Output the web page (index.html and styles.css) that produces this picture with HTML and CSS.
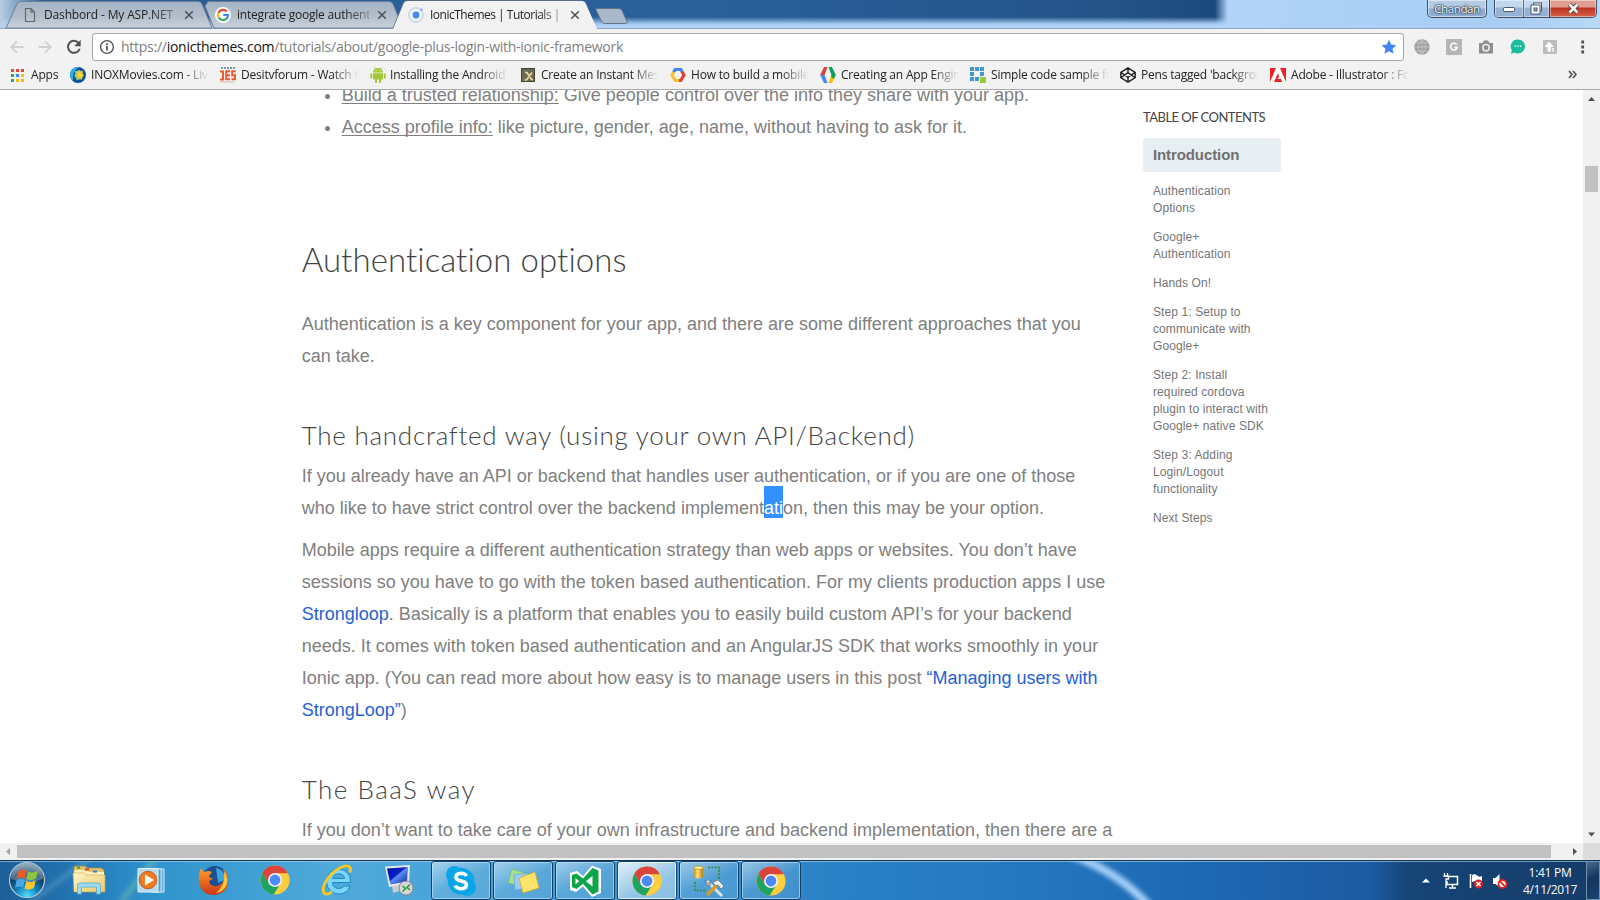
FILE: index.html
```html
<!DOCTYPE html>
<html lang="en">
<head>
<meta charset="utf-8">
<title>IonicThemes | Tutorials</title>
<link rel="stylesheet" href="styles.css">
</head>
<body>
<svg class="defs" width="0" height="0" aria-hidden="true">
  <defs>
    <linearGradient id="tabfill" x1="0" y1="0" x2="0" y2="1"><stop offset="0" stop-color="#a3b3c6"/><stop offset=".55" stop-color="#b3becb"/><stop offset="1" stop-color="#c8d2de"/></linearGradient>
    <radialGradient id="orb" cx=".5" cy=".95" r=".9"><stop offset="0" stop-color="#4fe0ff"/><stop offset=".35" stop-color="#1283bd"/><stop offset=".7" stop-color="#0e3c60"/><stop offset="1" stop-color="#6d8ba3"/></radialGradient>
    <radialGradient id="sun" cx=".6" cy=".5" r=".5"><stop offset="0" stop-color="#ffe93b"/><stop offset=".6" stop-color="#e8c62c"/><stop offset="1" stop-color="#7fbf9a"/></radialGradient>
    <linearGradient id="folder" x1="0" y1="0" x2="1" y2="1"><stop offset="0" stop-color="#fff6c8"/><stop offset="1" stop-color="#e9c96b"/></linearGradient>
    <linearGradient id="fox" x1="0" y1="0" x2="0" y2="1"><stop offset="0" stop-color="#f7a42c"/><stop offset=".5" stop-color="#ea6a1c"/><stop offset="1" stop-color="#c8341a"/></linearGradient>
    <linearGradient id="gold" x1="0" y1="0" x2="1" y2="0"><stop offset="0" stop-color="#c98f12"/><stop offset=".4" stop-color="#ffe680"/><stop offset="1" stop-color="#b87c08"/></linearGradient>
    <linearGradient id="screen" x1="0" y1="0" x2="1" y2="1"><stop offset="0" stop-color="#0613a0"/><stop offset=".45" stop-color="#0a1fc8"/><stop offset=".5" stop-color="#5b8cf0"/><stop offset="1" stop-color="#0a24b0"/></linearGradient>
    <symbol id="chrome" viewBox="0 0 30 30">
      <circle cx="15" cy="15" r="14.6" fill="#ffcd40"/>
      <path d="M2.4 7.7A14.6 14.6 0 0 0 13.6 29.5L20.6 18.5 9.2 18.7Z" fill="#1da362"/>
      <path d="M2.4 7.7A14.6 14.6 0 0 1 27.9 8.2H15L8.800 18.3Z" fill="#d9453d"/>
      <circle cx="15" cy="15" r="7" fill="#f4f6f8"/><circle cx="15" cy="15" r="5.4" fill="#4c8bf5"/>
    </symbol>
  </defs>
</svg>
<div class="desktop">
  <header class="titlebar">
    <div class="tabs">
      <div class="tab tab-a">
        <svg class="tab-shape" width="206" height="29" viewBox="0 0 206 29"><path d="M0 28 11 4Q12 1.500 15 1.500H192Q195 1.500 196 4L206 28Z" fill="url(#tabfill)" stroke="#6d7f96"/></svg>
        <svg class="tab-icon" width="16" height="16" viewBox="0 0 16 16"><path d="M3.500 1.500H9L12.500 5V14.500H3.500ZM9 1.500V5H12.500" fill="none" stroke="#666" stroke-width="1.200"/></svg>
        <span class="tab-title">Dashbord - My ASP.NET</span>
        <svg class="tab-close" width="10" height="10" viewBox="0 0 10 10"><path d="M1.200 1.200 8.800 8.800M8.800 1.200 1.200 8.800" stroke="#4d5156" stroke-width="1.500"/></svg>
      </div>
      <div class="tab tab-b">
        <svg class="tab-shape" width="196" height="29" viewBox="0 0 196 29"><path d="M1 1.500H182Q185 1.500 186 4L196 28H7L-2 6Z" fill="url(#tabfill)" stroke="#6d7f96"/></svg>
        <svg class="tab-icon" width="16" height="16" viewBox="0 0 16 16"><circle cx="8" cy="8" r="8" fill="#fff"/><g fill="none" stroke-width="2.200"><path d="M11.800 4.500A5 5 0 0 0 3.500 5.700" stroke="#ea4335"/><path d="M3.500 5.700A5 5 0 0 0 3.600 10.500" stroke="#fbbc05"/><path d="M3.600 10.500A5 5 0 0 0 11.300 11.800" stroke="#34a853"/><path d="M11.300 11.800A5 5 0 0 0 13 8H8.200" stroke="#4285f4"/></g></svg>
        <span class="tab-title">integrate google authent</span>
        <svg class="tab-close" width="10" height="10" viewBox="0 0 10 10"><path d="M1.200 1.200 8.800 8.800M8.800 1.200 1.200 8.800" stroke="#4d5156" stroke-width="1.500"/></svg>
      </div>
      <div class="tab tab-c">
        <svg class="tab-shape" width="206" height="30" viewBox="0 0 206 30"><path d="M0 29 10 4Q11 1 14 1H189Q192 1 193 4L204 29V30H0Z" fill="#f2f2f2"/><path d="M0 28 10 4Q11 .5 14 .5H189" fill="none" stroke="#5f7187" stroke-width=".8"/></svg>
        <svg class="tab-icon" width="16" height="16" viewBox="0 0 16 16"><circle cx="8" cy="8" r="7.200" fill="none" stroke="#a9c6f7" stroke-width="1"/><circle cx="8" cy="8" r="3.400" fill="#4489f6"/><circle cx="13.400" cy="2.800" r="1.300" fill="#76a8f7"/></svg>
        <span class="tab-title">IonicThemes | Tutorials |</span>
        <svg class="tab-close" width="10" height="10" viewBox="0 0 10 10"><path d="M1.200 1.200 8.800 8.800M8.800 1.200 1.200 8.800" stroke="#4d5156" stroke-width="1.500"/></svg>
      </div>
      <svg class="newtab" width="36" height="19" viewBox="0 0 36 19"><path d="M3 1.500H25Q27 1.500 28 3.500L33 14.500Q33.500 16.500 31.500 16.500H11Q8.500 16.500 7.500 14.500L2 3Q1.500 1.500 3 1.500Z" fill="#a9b9cb" stroke="#60728a"/></svg>
    </div>
    <div class="user">Chandan</div>
    <div class="winbtns">
      <span class="wb wb-min"><svg width="12" height="6" viewBox="0 0 12 6"><rect x=".5" y=".5" width="11" height="4" rx="1" fill="#fff" stroke="#4b5669"/></svg></span>
      <span class="wb wb-max"><svg width="13" height="13" viewBox="0 0 13 13"><rect x="3.500" y="1" width="8" height="8" fill="#fff" stroke="#4b5669"/><rect x="1" y="3" width="9" height="9" fill="#fff" stroke="#4b5669"/><rect x="4" y="6" width="3" height="3" fill="#9fb5d0" stroke="#4b5669"/></svg></span>
      <span class="wb wb-close"><svg width="13" height="11" viewBox="0 0 13 11"><path d="M2.500 1.500 10.500 9.500M10.500 1.500 2.500 9.500" stroke="#5a2a2c" stroke-width="4.400"/><path d="M2.500 1.500 10.500 9.500M10.500 1.500 2.500 9.500" stroke="#fff" stroke-width="2.600"/></svg></span>
    </div>
  </header>

  <div class="toolbar">
    <svg class="nav" width="14" height="14" viewBox="0 0 14 14"><path d="M13.500 7H1.500M7 1.300 1.300 7 7 12.700" fill="none" stroke="#d0d0d0" stroke-width="1.900"/></svg>
    <svg class="nav" width="14" height="14" viewBox="0 0 14 14"><path d="M.5 7H12.500M7 1.300 12.700 7 7 12.700" fill="none" stroke="#d0d0d0" stroke-width="1.900"/></svg>
    <svg class="reload" width="16" height="16" viewBox="0 0 16 16"><path d="M12.700 4.100A6 6 0 1 0 13.700 9.700" fill="none" stroke="#505050" stroke-width="2"/><path d="M14.700.8V7.200H8.300Z" fill="#505050"/></svg>
    <div class="omnibox">
      <svg width="16" height="16" viewBox="0 0 16 16"><circle cx="8" cy="8" r="6.400" fill="none" stroke="#555" stroke-width="1.400"/><path d="M8 7V11.600M8 4.300V6" stroke="#555" stroke-width="1.800"/></svg>
      <span class="url">https://<b>ionicthemes.com</b>/tutorials/about/google-plus-login-with-ionic-framework</span>
      <svg class="star" width="16" height="16" viewBox="0 0 16 16"><path d="M8 .8 10.200 5.600 15.300 6.200 11.500 9.700 12.600 14.800 8 12.200 3.400 14.800 4.500 9.700.7 6.200 5.800 5.600Z" fill="#4285f4"/></svg>
    </div>
    <div class="exts">
      <svg width="16" height="16" viewBox="0 0 16 16"><circle cx="8" cy="8" r="7.700" fill="#a0a0a0"/><path d="M8 0V16M0 8H16M2 3.800H14M2 12.200H14M8 .5Q.5 8 8 15.500M8 .5Q15.500 8 8 15.500" fill="none" stroke="#c9c9c9" stroke-width=".8"/></svg>
      <svg width="16" height="16" viewBox="0 0 16 16"><rect width="16" height="16" fill="#b5b5b5"/><path d="M10.700 5.600A3.400 3.400 0 1 0 11.200 8.500H8.300" fill="none" stroke="#fff" stroke-width="1.500"/></svg>
      <svg width="16" height="16" viewBox="0 0 16 16"><path d="M1 4H4.500L6 1.500H10L11.500 4H15V14.500H1Z" fill="#8e8e8e"/><circle cx="8" cy="8.800" r="3.200" fill="none" stroke="#eee" stroke-width="1.500"/></svg>
      <svg width="16" height="16" viewBox="0 0 16 16"><path d="M8 .5A7 7 0 1 1 4.200 13.400L1 15 1.800 11.200A7 7 0 0 1 8 .5Z" fill="#1abc9c"/><path d="M4.700 7.200H6.200M7.300 7.200H8.800M9.900 7.200H11.400" stroke="#fff" stroke-width="1.300"/></svg>
      <svg width="16" height="16" viewBox="0 0 16 16"><rect x="1" y="1" width="14" height="14" rx="1" fill="#bdbdbd"/><path d="M7 2.500 12 8H9V12.500H5.500V8H2.500Z" fill="#fff"/><path d="M10 9H12V12.500H10Z" fill="#eee"/></svg>
      <svg width="16" height="16" viewBox="0 0 16 16"><path d="M8.700 1.600V4.400M8.700 6.600V9.400M8.700 11.600V14.400" stroke="#505050" stroke-width="2.800"/></svg>
    </div>
  </div>

  <nav class="bookmarks">
    <div class="bm bm-apps"><svg width="14" height="14" viewBox="0 0 14 14"><path d="M1 1H4V4H1ZM6 1H9V4H6ZM11 1H14V4H11Z" fill="#ea4335"/><path d="M1 6H4V9H1Z" fill="#34a853"/><path d="M6 6H9V9H6Z" fill="#4285f4"/><path d="M11 6H14V9H11Z" fill="#fbbc05"/><path d="M1 11H4V14H1Z" fill="#34a853"/><path d="M6 11H9V14H6ZM11 11H14V14H11Z" fill="#fbbc05"/></svg><span>Apps</span></div>
    <div class="bm"><svg width="16" height="16" viewBox="0 0 16 16"><circle cx="8" cy="8" r="8" fill="#0f4f9e"/><path d="M9 0A8 8 0 0 0 3 14Q2 4 9 0Z" fill="#2bb2dd"/><path d="M9 2.500 10.500 4 13 3.800 12.700 6.500 14 8.500 12.300 10.500 12 12.500 9 12.500 6.500 13.500 5.800 11 4.300 9 5 6.500 5 4 7.500 4Z" fill="url(#sun)"/></svg><span>INOXMovies.com - Liv</span></div>
    <div class="bm"><svg width="16" height="16" viewBox="0 0 16 16"><path d="M1 1H15" stroke="#547b93" stroke-width="1.600" stroke-dasharray="2 1"/><path d="M0 4.500H3V12.500H0M6.200 3.500V13M6 4.200H10M6 8.200H10M6 12.200H10M15.700 4.200H12.200V8.200H15V12.200H11.500" fill="none" stroke="#ee5a2a" stroke-width="2"/><path d="M0 15H14" stroke="#d9b9a6"/></svg><span>Desitvforum - Watch O</span></div>
    <div class="bm"><svg width="16" height="16" viewBox="0 0 16 16"><path d="M3 5.500A5 4.500 0 0 1 13 5.500ZM3 6.300H13V12.500H11V16H9V12.500H7V16H5V12.500H3ZM.3 6.500H2.200V11.500H.3ZM13.800 6.500H15.700V11.500H13.800Z" fill="#a4c639"/><path d="M4.500.5 5.800 2.200M11.500.5 10.200 2.200" stroke="#a4c639"/><path d="M5.500 3.600H6.500M9.500 3.600H10.500" stroke="#fff"/></svg><span class="near">Installing the Android</span></div>
    <div class="bm"><svg width="16" height="16" viewBox="0 0 16 16"><path d="M1 1H15V15H1Z" fill="#6c6a50"/><path d="M1.500 1.500H14.500V14.500H1.500Z" fill="none" stroke="#45432f"/><path d="M5 5.500H7L11.500 12.500H13M12 5.500 6.500 13H4.500" fill="none" stroke="#ead9a5" stroke-width="1.700"/></svg><span>Create an Instant Mes</span></div>
    <div class="bm"><svg width="16" height="16" viewBox="0 0 16 16"><g fill="none" stroke-width="3.200"><path d="M3.400 5.500 5.200 2.500H10.800L12.300 5" stroke="#4285f4"/><path d="M12 4.500 14 8 10.800 13.500H8.500" stroke="#db4437"/><path d="M9 13.500H5.200L2 8 3.800 5" stroke="#fbc02d"/></g></svg><span>How to build a mobile</span></div>
    <div class="bm"><svg width="16" height="16" viewBox="0 0 16 16"><path d="M4 0H7.500L4.500 8H.2Z" fill="#db4437"/><path d="M.2 8H4.500L7.500 16H4Z" fill="#4285f4"/><path d="M11.500 8H15.800L12 16H8.500Z" fill="#fbbc05"/><path d="M8.500 0H12L15.800 8 13.900 12 10.800 9.500 11.500 8Z" fill="#0f9d58"/></svg><span>Creating an App Engin</span></div>
    <div class="bm"><svg width="16" height="16" viewBox="0 0 16 16"><path d="M0 0H4V4H0ZM5 0H9V4H5ZM10 0H14V4H10ZM0 5H4V9H0ZM10 5H14V9H10ZM0 10H4V14H0ZM5 10H9V14H5Z" fill="#3f98cf"/><path d="M10 10H16V16H10Z" fill="#98c93c"/></svg><span>Simple code sample fo</span></div>
    <div class="bm"><svg width="16" height="16" viewBox="0 0 16 16"><path d="M8 .8 15.200 5.300V10.700L8 15.200.8 10.700V5.300ZM8 1V5.700M8 10.300V15M.8 5.300 8 10.300 15.200 5.300M.8 10.700 8 5.700 15.200 10.700" fill="none" stroke="#222" stroke-width="1.400"/></svg><span>Pens tagged 'backgrou</span></div>
    <div class="bm"><svg width="16" height="16" viewBox="0 0 16 16"><path d="M0 1H16V15H0Z" fill="#ed2224"/><path d="M6 1H10L16 15H12.200L11 12H7.500L9.200 9.500 8 6.300 4 15H0Z" fill="#fff"/></svg><span>Adobe - Illustrator : Fo</span></div>
    <svg class="more" width="9" height="9" viewBox="0 0 9 9"><path d="M1 1 4 4.500 1 8M5 1 8 4.500 5 8" fill="none" stroke="#505050" stroke-width="1.600"/></svg>
  </nav>

  <div class="viewport">
    <main class="page">
      <article class="article">
        <ul class="list">
          <li><u>Build a trusted relationship:</u> Give people control over the info they share with your app.</li>
          <li><u>Access profile info:</u> like picture, gender, age, name, without having to ask for it.</li>
        </ul>
        <h1>Authentication options</h1>
        <p>Authentication is a key component for your app, and there are some different approaches that you<br>can take.</p>
        <h2>The handcrafted way (using your own API/Backend)</h2>
        <p>If you already have an API or backend that handles user authentication, or if you are one of those<br>who like to have strict control over the backend implement<span class="sel">ati</span>on, then this may be your option.</p>
        <p>Mobile apps require a different authentication strategy than web apps or websites. You don’t have<br>sessions so you have to go with the token based authentication. For my clients production apps I use<br><a>Strongloop</a>. Basically is a platform that enables you to easily build custom API’s for your backend<br>needs. It comes with token based authentication and an AngularJS SDK that works smoothly in your<br>Ionic app. (You can read more about how easy is to manage users in this post <a>“Managing users with<br>StrongLoop”</a>)</p>
        <h2 class="baas">The BaaS way</h2>
        <p>If you don’t want to take care of your own infrastructure and backend implementation, then there are a</p>
      </article>
      <aside class="toc">
        <div class="toc-head">TABLE OF CONTENTS</div>
        <div class="toc-active">Introduction</div>
        <ul class="toc-list">
          <li>Authentication<br>Options</li>
          <li>Google+<br>Authentication</li>
          <li>Hands On!</li>
          <li>Step 1: Setup to<br>communicate with<br>Google+</li>
          <li>Step 2: Install<br>required cordova<br>plugin to interact with<br>Google+ native SDK</li>
          <li>Step 3: Adding<br>Login/Logout<br>functionality</li>
          <li>Next Steps</li>
        </ul>
      </aside>
    </main>
    <div class="vscroll">
      <svg width="17" height="17" viewBox="0 0 17 17"><path d="M5 11 8.500 7 12 11Z" fill="#505050"/></svg>
      <div class="vthumb"></div>
      <svg class="vdown" width="17" height="17" viewBox="0 0 17 17"><path d="M5 6.500H12L8.500 10.500Z" fill="#505050"/></svg>
    </div>
  </div>
  <div class="hscroll">
    <svg width="17" height="17" viewBox="0 0 17 17"><path d="M10 5V12L6 8.500Z" fill="#a3a3a3"/></svg>
    <div class="hthumb"></div>
    <svg class="hright" width="17" height="17" viewBox="0 0 17 17"><path d="M7 5V12L11 8.500Z" fill="#505050"/></svg>
    <div class="corner"></div>
  </div>

  <footer class="taskbar">
    <svg class="wall" width="1600" height="40" viewBox="0 0 1600 40"><defs><filter id="soft" x="-20%" y="-50%" width="140%" height="200%"><feGaussianBlur stdDeviation="2.500"/></filter></defs><g filter="url(#soft)" fill="none"><path d="M30 42Q55 22 90 -2" stroke="#8bbfe0" stroke-width="5" opacity=".35"/><path d="M120 42 155 -2" stroke="#9fdc9a" stroke-width="6" opacity=".35"/><path d="M1072 -6Q1120 12 1150 46" stroke="#a9d2fa" stroke-width="8"/></g></svg>
    <div class="launch">
      <span class="tb start"><svg width="38" height="38" viewBox="0 0 38 38"><circle cx="19" cy="19" r="17.500" fill="url(#orb)" stroke="#b7c8d6" stroke-width="1.200"/><path d="M3 18A16 16 0 0 1 35 18Q19 24 3 18Z" fill="#fff" opacity=".25"/><path d="M10.500 10.500Q14 7.500 18.500 10L17 17.500Q13 15.500 9 18Z" fill="#ee5a24"/><path d="M20 10.500Q25 13 30 9.500L28 17.500Q23 20 18.500 18Z" fill="#8fc63f"/><path d="M8.500 19.500Q12.500 17 16.700 19L15 26.500Q11 24.500 7 27Z" fill="#49a8e8"/><path d="M18.200 20Q22.500 22 27.600 19.500L26 27Q21 29.500 16.500 27.500Z" fill="#fcc72c"/></svg></span>
      <span class="tb"><svg width="34" height="32" viewBox="0 0 34 32"><path d="M2 3 4 2H13L15 4H29L32 6V27H2Z" fill="#dfbf69" stroke="#b08d37" stroke-width=".6"/><path d="M3 6H15L17 8H32V28H2V7Z" fill="#fff0b5"/><path d="M1 9H12L14 11H33V28H2Z" fill="url(#folder)" stroke="#c9a94f" stroke-width=".6"/><path d="M5 3.500H8" stroke="#23a83a" stroke-width="2"/><path d="M13 5.500H17" stroke="#d43c2e" stroke-width="2"/><path d="M21 7.500H25" stroke="#2e82d4" stroke-width="2"/><path d="M5.500 30V21.500Q5.500 19 8 19H26Q28.500 19 28.500 21.500V30H24.500V23H9.500V30Z" fill="#9fdcf1" stroke="#5aa9c9" stroke-width=".8"/></svg></span>
      <span class="tb"><svg width="32" height="30" viewBox="0 0 32 30"><path d="M18 4H29V27H18Z" fill="#69b0d8" stroke="#d3ecf8"/><path d="M16 4H26V27H16Z" fill="#519cc9" stroke="#d3ecf8"/><path d="M3 3.500H23V27H3Z" fill="#b5d8ea" stroke="#e2f3fa"/><circle cx="13" cy="15" r="8.700" fill="#ef7c21" stroke="#c45812"/><path d="M10 9.500 19 15 10 20.500Z" fill="#fff"/></svg></span>
      <span class="tb"><svg width="31" height="31" viewBox="0 0 31 31"><circle cx="17" cy="14" r="13" fill="#1c4f94"/><path d="M18 3Q28 5 26 15L20 18Z" fill="#3da6df"/><path d="M3 3Q4 6 7 7Q10 5 14 7L11 11Q11 13 15 13Q14 15 11 16Q11 20 16 21Q21 22 25 17Q28 12 25 4Q31 9 30 17Q29 29 16 30Q3 30 1 17Q0 9 3 3Z" fill="url(#fox)"/><path d="M26 7Q31 14 28 21Q25 27 18 28Q28 20 26 7Z" fill="#fcc637"/></svg></span>
      <span class="tb"><svg width="30" height="30"><use href="#chrome"/></svg></span>
      <span class="tb"><svg width="32" height="32" viewBox="0 0 32 32"><path d="M29.500 18.500H11.500Q12 24.500 18 24.500Q21.500 24.500 23 22H29Q26.500 30 17.800 30Q6 29 5.500 17.500Q6 6 17.500 5Q30 6 29.500 18.500ZM11.700 14.500H23.500Q23 10 17.700 9.800Q12.500 10 11.700 14.500Z" fill="#7ad6fb" stroke="#1687c8" stroke-width="1"/><path d="M29 8.500Q31 1 24 2Q15 4 7 14Q0 24 3 29Q5 31.500 11 28" fill="none" stroke="#fbc91e" stroke-width="2.800"/></svg></span>
      <span class="tb"><svg width="32" height="32" viewBox="0 0 32 32"><path d="M9 22 17 20 20 26 10 29Z" fill="#c4ccd2"/><path d="M2 2.500 27 1 26 19.500 6 23Z" fill="#e7e9e4"/><path d="M4 4.500 25 3 24 17.500 7.500 20.500Z" fill="url(#screen)"/><circle cx="23" cy="24" r="7" fill="#d5d8d8" stroke="#888"/><path d="M19.500 22 22.500 24.500 19.500 27.500M27 20.500 24 23.500 27 26" fill="none" stroke="#2d9436" stroke-width="1.500"/></svg></span>
    </div>
    <div class="running">
      <span class="run"><svg width="32" height="32" viewBox="0 0 32 32"><circle cx="9.500" cy="9.500" r="8.500" fill="#0aa5e6"/><circle cx="22.500" cy="22.500" r="8.500" fill="#0aa5e6"/><circle cx="16" cy="16" r="13.300" fill="#0aa5e6"/><path d="M21.500 11Q20 8.300 16 8.300Q11 8.500 11 12Q11 15 16 16Q21.500 17 21.500 20Q21 23.700 16 23.700Q11.300 23.500 10.300 20.500" fill="none" stroke="#fff" stroke-width="3.600"/></svg></span>
      <span class="run"><svg width="34" height="30" viewBox="0 0 34 30"><path d="M6 3 19 7 15 20 2 17Z" fill="#a6df91" stroke="#6bb559" stroke-width=".6"/><path d="M8 9 22 7 23 22 9 24Z" fill="#9ccdf8" stroke="#5a9ddc" stroke-width=".6"/><path d="M13 12 29 6 33 22 17 27Z" fill="#fbe36c" stroke="#d6a921" stroke-width=".8"/></svg></span>
      <span class="run"><svg width="32" height="32" viewBox="0 0 32 32"><path d="M1 8 8 6 14 11 23 .5 32 4V28L23 32 14 21.500 7 27 1 25Z" fill="#fff"/><path d="M3 10 7.500 8.500 14 13.500 23.500 3 29.500 5.500V26.500L23.500 29.500 14 18.800 7.500 24 3 22ZM6.500 13V19.500L10.200 16.200ZM17 16.200 23.500 21.500V11Z" fill="#0da44a" fill-rule="evenodd"/></svg></span>
      <span class="run active"><svg width="30" height="30"><use href="#chrome"/></svg></span>
      <span class="run"><svg width="32" height="32" viewBox="0 0 32 32"><path d="M1 2.500V12Q5.500 15 10 12V2.500Z" fill="url(#gold)"/><ellipse cx="5.500" cy="2.700" rx="4.500" ry="1.700" fill="#fff0a0" stroke="#a97908" stroke-width=".6"/><path d="M15 2.500H26V14M2 17V25.500H12" fill="none" stroke="#2a8a16" stroke-width="1.700" stroke-dasharray="1.700 1.700"/><path d="M14 16 29 31" stroke="#d9dfe3" stroke-width="3"/><path d="M14 30 25 19" stroke="#d69f2c" stroke-width="3.400"/><path d="M20 17 25 15 31 21 28 24 25 20 22 21Z" fill="#e9eef1" stroke="#667680" stroke-width=".8"/><path d="M12 15 15 19 18 15 17 21 13 20Z" fill="#b4c0c8" stroke="#5b6b76" stroke-width=".6"/></svg></span>
      <span class="run"><svg width="30" height="30"><use href="#chrome"/></svg></span>
    </div>
    <div class="tray">
      <svg width="8" height="5" viewBox="0 0 8 5"><path d="M0 4.500 4 .5 8 4.500Z" fill="#fff"/></svg>
      <svg class="net" width="16" height="16" viewBox="0 0 16 16"><path d="M5 3.500H14.500V11.500H4V8M9.500 11.500V14.500M6 15H13" fill="none" stroke="#fff" stroke-width="1.500"/><path d="M1.500 0V4M4.500 0V4M.5 3H5.500V6H3V15" fill="none" stroke="#fff" stroke-width="1.300"/></svg>
      <svg class="flag" width="16" height="16" viewBox="0 0 16 16"><path d="M2.500 1V15" stroke="#fff" stroke-width="1.500"/><path d="M4 2Q7 .5 9 2.500T14 3V9H9Q7 7.500 4 9Z" fill="#fff"/><circle cx="10.500" cy="11" r="4.500" fill="#d8202a"/><path d="M8.500 9 12.500 13M12.500 9 8.500 13" stroke="#fff" stroke-width="1.600"/></svg>
      <svg class="vol" width="16" height="16" viewBox="0 0 16 16"><path d="M1 5H3.500L7.500 1V14L3.500 11H1Z" fill="#fff"/><circle cx="10.500" cy="11" r="4" fill="#fff" stroke="#e0241c" stroke-width="1.800"/><path d="M7.800 8.200 13.200 13.800" stroke="#e0241c" stroke-width="1.800"/></svg>
      <div class="clock"><span>1:41 PM</span><span>4/11/2017</span></div>
      <div class="peek"></div>
    </div>
  </footer>
</div>
</body>
</html>
```
FILE: styles.css
```css
* { box-sizing: border-box; }
body { margin: 0; width: 1600px; height: 900px; overflow: hidden; font-family: "Open Sans", "Noto Sans", sans-serif; font-size: 12px; background: #fff; }
svg { display: block; flex: none; overflow: visible; }
.defs { position: absolute; }
.desktop { display: flex; flex-direction: column; width: 1600px; height: 900px; }
ul { list-style: none; margin: 0; padding: 0; }

/* Title bar */
.titlebar {
  position: relative; flex: none; display: flex; height: 29px; border-bottom: 1px solid #8ea9c8;
  background:
    linear-gradient(90deg, transparent 1215px, #b1d4f8 1228px, #a8cdf3 1500px, #b8d8f6 1600px),
    linear-gradient(90deg, #b9cfe4 0, rgba(185,207,228,0) 45px),
    linear-gradient(180deg, transparent 17px, #a5cbf0 24px, #b9d9fa 28px),
    linear-gradient(90deg, #2a5c94 0, #2a609b 700px, #245489 1100px, #1d4a7d 1215px);
}
.tabs { display: flex; align-items: center; width: 1427px; height: 29px; }
.tab { position: relative; flex: none; display: flex; align-items: center; height: 29px; }
.tab > * { position: relative; }
.tab > .tab-shape { position: absolute; left: 0; top: 0; }
.tab-a { width: 201px; margin-left: 6px; padding-left: 16px; }
.tab-b { width: 188px; padding-left: 8px; }
.tab-c { width: 200px; margin-left: -2px; padding-left: 15px; }
.tab-title { width: 132px; margin-left: 6px; white-space: nowrap; color: #222; letter-spacing: -.2px; -webkit-mask-image: linear-gradient(90deg, #000 108px, rgba(0,0,0,.35) 132px); mask-image: linear-gradient(90deg, #000 108px, rgba(0,0,0,.35) 132px); }
.tab-a .tab-title { letter-spacing: -.15px; }
.tab-c .tab-title { letter-spacing: -.5px; }
.tab-close { margin-left: 8px; }
.newtab { margin-left: 1px; margin-top: 3px; }
.user { width: 60px; height: 18px; border: 1px solid #3e506b; border-top: 0; border-radius: 0 0 5px 5px; background: linear-gradient(#b3cbe5 0 8px, #8fadd0 9px 17px); box-shadow: inset 0 0 0 1px rgba(255,255,255,.5); color: #fff; text-align: center; line-height: 17px; font-size: 11.500px; letter-spacing: -.4px; text-shadow: 0 0 2px #1c2a3d, 0 0 2px #1c2a3d, 0 0 1px #1c2a3d; }
.winbtns { display: flex; margin-left: 7px; width: 103px; height: 18px; border: 1px solid #3e506b; border-top: 0; border-radius: 0 0 5px 5px; overflow: hidden; }
.wb { display: flex; align-items: center; justify-content: center; height: 17px; background: linear-gradient(#c3d8ee 0 7px, #93b2d4 8px 17px); box-shadow: inset 0 0 0 1px rgba(255,255,255,.45); }
.wb-min { width: 28px; padding-top: 3px; }
.wb-max { width: 27px; border-left: 1px solid #52657f; }
.wb-close { width: 47px; border-left: 1px solid #5b2a2c; background: linear-gradient(#dd9e91 0 7px, #bd3322 8px, #d4624a 17px); }

/* Toolbar */
.toolbar { flex: none; display: flex; align-items: center; height: 36px; background: #f2f2f2; padding: 0 0 0 10px; }
.nav { margin-right: 14px; }
.reload { margin-right: 10px; }
.omnibox { display: flex; align-items: center; width: 1312px; height: 28px; border: 1px solid #a6a6a6; border-radius: 3px; background: #fff; padding: 0 6px; }
.url { margin-left: 6px; margin-top: -2px; font-size: 14px; letter-spacing: -.26px; color: #808080; white-space: nowrap; }
.url b { font-weight: 400; color: #111; }
.star { margin-left: auto; }
.exts { display: flex; gap: 16px; margin-left: 10px; }

/* Bookmarks */
.bookmarks { flex: none; display: flex; align-items: center; height: 25px; background: #f2f2f2; border-bottom: 1px solid #a9a9a9; padding: 0 0 5px 10px; }
.bm { display: flex; align-items: center; flex: none; width: 150px; color: #222; }
.bm span { width: 124px; margin-left: 5px; white-space: nowrap; line-height: 18px; letter-spacing: -.2px; -webkit-mask-image: linear-gradient(90deg, #000 90px, transparent 118px); mask-image: linear-gradient(90deg, #000 90px, transparent 118px); }
.bm .near { margin-left: 4px; }
.bm-apps { width: 60px; }
.bm-apps span { width: 34px; margin-left: 7px; }
.more { margin-left: 148px; }

/* Page */
.viewport { flex: none; display: flex; height: 753px; overflow: hidden; background: #fff; }
.page { display: flex; width: 1583px; height: 753px; overflow: hidden; padding-left: 301.7px; }
.article { width: 841.3px; margin-top: -11px; font: 18px/32px "Liberation Sans", Arial, sans-serif; color: #808080; white-space: nowrap; }
.list { padding-left: 40px; height: 64px; }
.list li { position: relative; }
.list li::before { content: ""; position: absolute; left: -17px; top: 15px; width: 5px; height: 5px; border-radius: 50%; background: #808080; }
u { text-underline-offset: 2px; text-decoration-thickness: 1px; text-decoration-skip-ink: none; }
h1, h2 { font-family: Lato, "Open Sans", sans-serif; font-weight: 300; font-variant-ligatures: none; color: #444; margin: 0; }
h1 { font-size: 33px; line-height: 48px; margin: 92px 0 25px; letter-spacing: .05px; }
h2 { font-size: 26px; line-height: 32px; margin: 47px 0 9px; letter-spacing: .75px; }
.baas { letter-spacing: 1.5px; }
p { margin: 0 0 10px; }
.article a { color: #2461d8; }
.sel { background: #3390ff; color: #fff; padding-top: 12px; }
.toc { width: 138px; padding-top: 17px; color: #757575; font-family: "Liberation Sans", Arial, sans-serif; }
.toc-head { font: 400 13px/20px Lato, sans-serif; letter-spacing: -.52px; color: #444; white-space: nowrap; }
.toc-active { margin-top: 11px; height: 34px; padding-left: 10px; border-radius: 3px; background: #e8eff3; font-weight: 700; font-size: 15px; letter-spacing: -.1px; line-height: 34px; color: #707070; }
.toc-list { padding: 11px 0 0 10px; font-size: 12px; letter-spacing: .1px; line-height: 17px; white-space: nowrap; }
.toc-list li { margin-bottom: 12px; }

/* Scrollbars */
.vscroll { display: flex; flex-direction: column; width: 17px; background: #f1f1f1; }
.vthumb { margin: 59px 2px 0; height: 26px; background: #c1c1c1; }
.vdown { margin-top: auto; }
.hscroll { flex: none; display: flex; height: 17px; background: #f1f1f1; }
.hthumb { width: 1534px; height: 13px; margin-top: 2px; background: #c1c1c1; }
.hright { margin-left: auto; }
.corner { width: 17px; background: #dcdcdc; }

/* Taskbar */
.taskbar { position: relative; flex: none; display: flex; height: 40px; border-top: 1px solid #12354f; box-shadow: inset 0 1px 0 rgba(190,225,250,.55); background: linear-gradient(90deg, #1d5f98 0, #2274b2 70px, #2e93cd 150px, #4fa9d9 330px, #4ba4d8 440px, #3b93d0 700px, #2a82c6 830px, #2478c0 1010px, #1e68b4 1200px, #1c5ba2 1370px, #164476 1410px, #143c6a 1600px); overflow: hidden; }
.taskbar > * { position: relative; }
.taskbar > .wall { position: absolute; left: 0; top: 0; }
.launch { display: flex; width: 431px; }
.tb { display: flex; flex: none; align-items: center; justify-content: center; width: 62px; height: 39px; padding-bottom: 1px; }
.tb.start { width: 54px; padding-bottom: 2px; margin-right: 4px; }
.running { display: flex; gap: 2px; }
.run { display: flex; align-items: center; justify-content: center; width: 60px; height: 39px; border: 1px solid #153f66; border-radius: 3px; box-shadow: inset 0 0 0 1px rgba(200,232,255,.6); background: linear-gradient(155deg, rgba(255,255,255,.5), rgba(255,255,255,.12) 50%, rgba(255,255,255,.08)); }
.run.active { background: linear-gradient(155deg, rgba(255,255,255,.85), rgba(255,255,255,.45) 60%, rgba(255,255,255,.4)); box-shadow: inset 0 0 0 1px rgba(235,248,255,.9); }
.tray { display: flex; align-items: center; margin-left: auto; color: #fff; }
.net { margin-left: 13px; }
.flag { margin-left: 9px; }
.vol { margin-left: 8px; }
.clock { display: flex; flex-direction: column; align-items: center; width: 70px; margin-left: 7px; line-height: 17px; font-size: 12px; letter-spacing: -.3px; white-space: nowrap; }
.peek { width: 14px; height: 39px; margin-left: 1px; border: 1px solid #7390b0; background: linear-gradient(150deg, #4c6b8f, #14365f 45%, #1a4272); }
```
